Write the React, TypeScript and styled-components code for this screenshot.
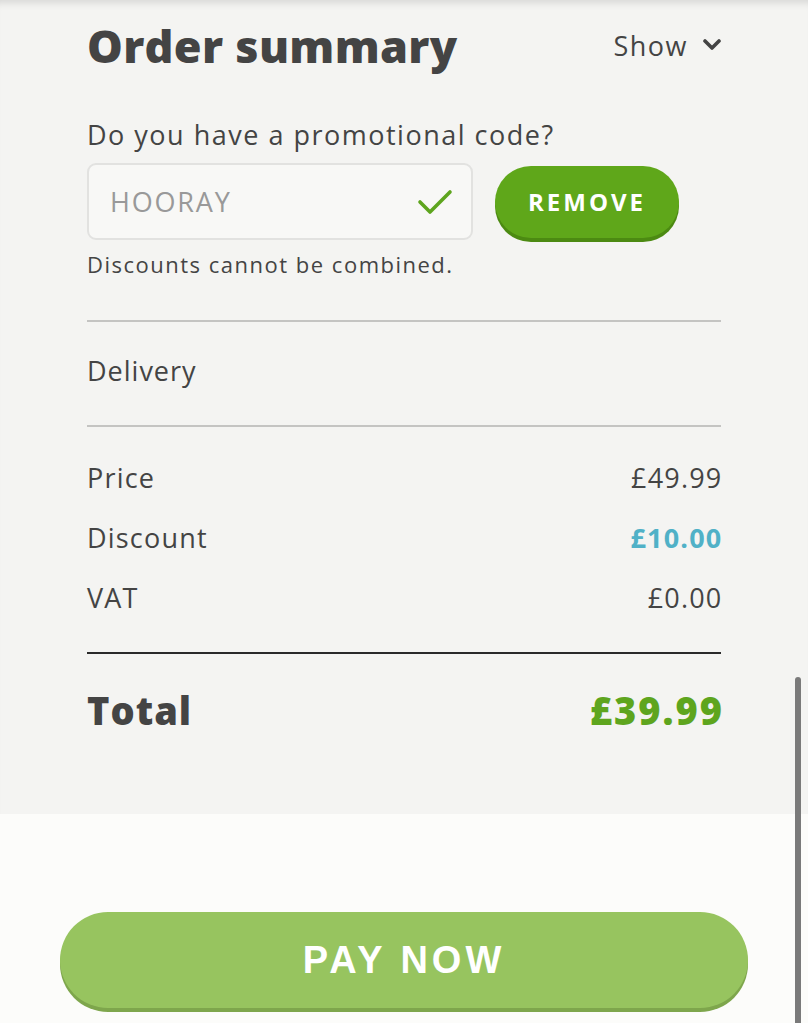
import styled, { createGlobalStyle } from 'styled-components';

const GlobalStyle = createGlobalStyle`
  html, body {
    margin: 0;
    padding: 0;
    background: #fcfcfa;
  }

  body {
    font-family: 'Open Sans', 'Noto Sans', sans-serif;
    color: #444;
  }
`;

const Page = styled.div`
  position: relative;
  min-height: 1023px;
  overflow: hidden;
`;

const Summary = styled.section`
  background: #f4f4f2;
  padding: 0 87px 74px;
  box-shadow: inset 0 9px 8px -7px rgba(0, 0, 0, 0.14);
`;

const Header = styled.div`
  height: 90px;
  display: flex;
  align-items: center;
  justify-content: space-between;
`;

const Title = styled.h1`
  margin: 0;
  font-size: 45px;
  font-weight: 800;
  letter-spacing: 0.3px;
  color: #444;
`;

const Toggle = styled.button`
  display: flex;
  align-items: center;
  gap: 15px;
  padding: 0;
  border: 0;
  background: none;
  font: inherit;
  font-size: 27px;
  letter-spacing: 1.5px;
  color: #444;
`;

const Label = styled.p`
  margin: 25px 0 0;
  font-size: 27px;
  letter-spacing: 1.5px;
  line-height: 40px;
  color: #444;
`;

const PromoRow = styled.div`
  margin-top: 8px;
  display: flex;
  align-items: center;
  gap: 22px;
`;

const InputBox = styled.div`
  box-sizing: border-box;
  width: 386px;
  height: 77px;
  display: flex;
  align-items: center;
  justify-content: space-between;
  padding: 0 18px 0 21px;
  border: 2px solid #e2e2e0;
  border-radius: 9px;
  background: #f8f8f6;
  font-size: 27px;
  letter-spacing: 1.8px;
  color: #999;
`;

const PillButton = styled.button<{ $bg: string; $edge: string }>`
  border: 0;
  border-radius: 999px;
  background: ${(p) => p.$bg};
  box-shadow: 0 4px 0 ${(p) => p.$edge};
  color: #fff;
  font-weight: 700;
  text-transform: uppercase;
  cursor: pointer;
`;

const RemoveButton = styled(PillButton)`
  width: 184px;
  height: 72px;
  font-family: 'Open Sans', sans-serif;
  font-size: 24px;
  letter-spacing: 3px;
`;

const Helper = styled.p`
  margin: 9px 0 0;
  font-size: 22px;
  letter-spacing: 1.5px;
  line-height: 30px;
  color: #444;
`;

const Divider = styled.hr<{ $dark?: boolean }>`
  margin: ${(p) => (p.$dark ? '25px' : '0')} 0 0;
  height: 2px;
  border: 0;
  background: ${(p) => (p.$dark ? '#2a2a2a' : '#c4c4c2')};
`;

const FirstDivider = styled(Divider)`
  margin-top: 41px;
`;

const Delivery = styled.div`
  padding: 29px 0 34px;
  font-size: 27px;
  letter-spacing: 1px;
  line-height: 40px;
`;

const Rows = styled.div`
  margin-top: 20px;
`;

const Row = styled.div`
  display: flex;
  justify-content: space-between;
  align-items: center;
  height: 60px;
  font-size: 27px;
  letter-spacing: 1.2px;
`;

const Amount = styled.span<{ $accent?: string }>`
  margin-right: -1.5px;
  color: ${(p) => p.$accent ?? '#444'};
  font-weight: ${(p) => (p.$accent ? 700 : 400)};
`;

const TotalRow = styled(Row)`
  margin-top: 26px;
  font-size: 38px;
  letter-spacing: 1px;
  font-weight: 800;
`;

const TotalAmount = styled.span`
  margin-right: -3px;
  color: #5ea51e;
  letter-spacing: 2px;
`;

const PayArea = styled.div`
  padding: 98px 60px 0;
`;

const PayButton = styled(PillButton)`
  width: 688px;
  height: 96px;
  font-family: 'Liberation Sans', Arial, sans-serif;
  font-size: 38px;
  letter-spacing: 4px;
`;

const Scrollbar = styled.div`
  position: absolute;
  right: 7px;
  top: 677px;
  bottom: 0;
  width: 6px;
  border-radius: 3px 3px 0 0;
  background: #7a7a7a;
`;

const prices = [
  { label: 'Price', value: '£49.99' },
  { label: 'Discount', value: '£10.00', accent: '#50b1c7' },
  { label: 'VAT', value: '£0.00' },
];

export default function App() {
  return (
    <Page>
      <GlobalStyle />
      <Summary>
        <Header>
          <Title>Order summary</Title>
          <Toggle>
            Show
            <svg width="18" height="12" viewBox="0 0 18 12">
              <polyline
                points="2,2 9,9 16,2"
                fill="none"
                stroke="#444"
                strokeWidth="3.6"
                strokeLinecap="round"
                strokeLinejoin="round"
              />
            </svg>
          </Toggle>
        </Header>

        <Label>Do you have a promotional code?</Label>
        <PromoRow>
          <InputBox>
            HOORAY
            <svg width="36" height="28" viewBox="0 0 36 28">
              <polyline
                points="3,14 13,24 33,4"
                fill="none"
                stroke="#5ea51e"
                strokeWidth="3.6"
                strokeLinecap="round"
                strokeLinejoin="round"
              />
            </svg>
          </InputBox>
          <RemoveButton $bg="#5fa71a" $edge="#4c8a12">
            Remove
          </RemoveButton>
        </PromoRow>
        <Helper>Discounts cannot be combined.</Helper>

        <FirstDivider />
        <Delivery>Delivery</Delivery>
        <Divider />

        <Rows>
          {prices.map((p) => (
            <Row key={p.label}>
              <span>{p.label}</span>
              <Amount $accent={p.accent}>{p.value}</Amount>
            </Row>
          ))}
        </Rows>

        <Divider $dark />
        <TotalRow>
          <span>Total</span>
          <TotalAmount>£39.99</TotalAmount>
        </TotalRow>
      </Summary>

      <PayArea>
        <PayButton $bg="#97c45f" $edge="#7ea64c">
          Pay now
        </PayButton>
      </PayArea>

      <Scrollbar />
    </Page>
  );
}
